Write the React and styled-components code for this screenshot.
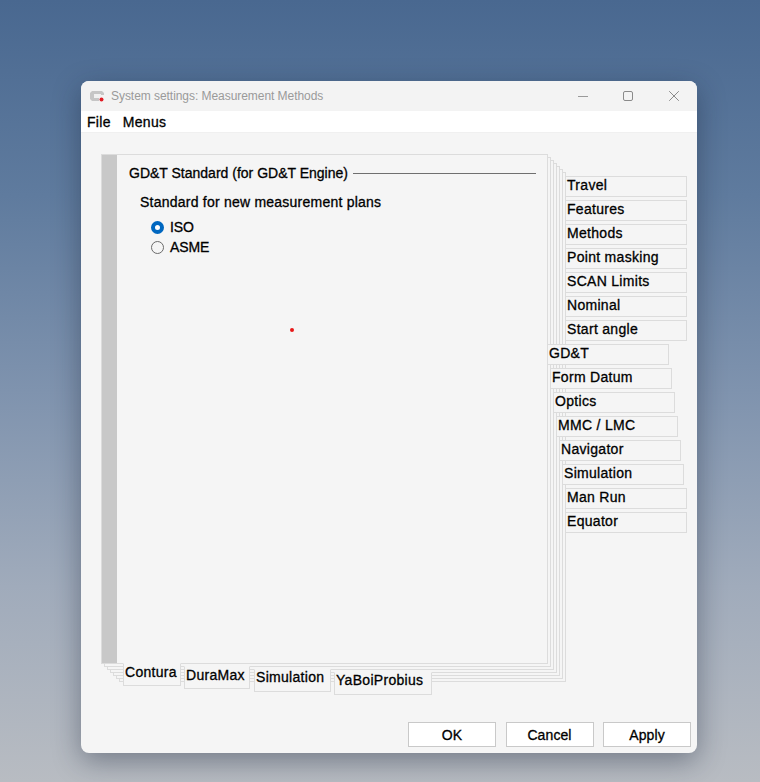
import React from "react";
import styled, { createGlobalStyle } from "styled-components";

const Global = createGlobalStyle`
  html, body { margin: 0; padding: 0; height: 100%; }
  body { overflow: hidden; }
  #root { height: 782px; }
`;

const Desktop = styled.div`
  width: 760px;
  height: 782px;
  box-sizing: border-box;
  padding: 81px 63px 29px 81px;
  background: linear-gradient(180deg, #496890 0%, #5f7b9e 25%, #7f93ae 50%, #a0abbb 75%, #b8bcc2 100%);
  font-family: "Liberation Sans", Arial, sans-serif;
  font-size: 14px;
  letter-spacing: 0.3px;
  color: #000;
  -webkit-text-stroke: 0.3px #000;
`;

const Window = styled.div`
  width: 616px;
  height: 672px;
  display: flex;
  flex-direction: column;
  background: #f5f5f5;
  border-radius: 8px;
  overflow: hidden;
  box-shadow: 0 8px 28px rgba(20, 30, 50, 0.4);
`;

const TitleBar = styled.div`
  height: 30px;
  flex: none;
  display: flex;
  align-items: center;
  padding-left: 8px;
  background: #f3f3f3;
  color: #9a9a9a;
  font-size: 12px;
  letter-spacing: -0.05px;
  -webkit-text-stroke: 0;
`;

const TitleText = styled.span`
  margin-left: 6px;
  flex: 1;
`;

const Controls = styled.div`
  display: flex;
  align-items: center;
  gap: 36px;
  margin-right: 18px;
`;

const ControlIcon = styled.svg`
  width: 10px;
  height: 10px;
  flex: none;
  margin-right: ${(p) => p.$pull || 0}px;
`;

const Menu = styled.div`
  height: 22px;
  flex: none;
  display: flex;
  align-items: center;
  gap: 12px;
  padding-left: 6px;
  background: #fff;
  border-bottom: 1px solid #f0f0f0;
  box-sizing: border-box;
`;

const Notebook = styled.div`
  flex: 1;
  padding: 21px 0 0 20px;
  display: flex;
  flex-direction: column;
`;

const Upper = styled.div`
  display: flex;
  align-items: flex-start;
`;

const Page = styled.div`
  width: 447px;
  height: 510px;
  box-sizing: border-box;
  flex: none;
  display: flex;
  position: relative;
  background: #f5f5f5;
  border: 1px solid #dcdcdc;
  box-shadow:
    3px 3px 0 -1px #f5f5f5, 3px 3px 0 0 #dcdcdc,
    6px 6px 0 -1px #f5f5f5, 6px 6px 0 0 #dcdcdc,
    9px 9px 0 -1px #f5f5f5, 9px 9px 0 0 #dcdcdc,
    12px 12px 0 -1px #f5f5f5, 12px 12px 0 0 #dcdcdc,
    15px 15px 0 -1px #f5f5f5, 15px 15px 0 0 #dcdcdc,
    18px 18px 0 -1px #f5f5f5, 18px 18px 0 0 #dcdcdc;
`;

const Strip = styled.div`
  width: 15px;
  flex: none;
  background: #c8c8c8;
`;

const Content = styled.div`
  flex: 1;
  padding: 9px 11px 0 12px;
`;

const GroupHead = styled.div`
  display: flex;
  align-items: center;
  gap: 5px;
  height: 18px;
  letter-spacing: 0;
`;

const Rule = styled.div`
  flex: 1;
  height: 1px;
  background: #6f6f6f;
`;

const Prompt = styled.div`
  margin: 11px 0 0 11px;
  height: 18px;
  line-height: 18px;
  letter-spacing: 0.23px;
`;

const Options = styled.div`
  margin: 9px 0 0 22px;
  display: flex;
  flex-direction: column;
  gap: 6px;
  letter-spacing: -0.1px;
`;

const Option = styled.label`
  display: flex;
  align-items: center;
  gap: 6px;
  height: 14px;
`;

const Radio = styled.span`
  width: 13px;
  height: 13px;
  box-sizing: border-box;
  border-radius: 50%;
  background: ${(p) => (p.$on ? "#fff" : "#f5f5f5")};
  border: ${(p) => (p.$on ? "4px solid #0067c0" : "1px solid #6b6b6b")};
`;

const Dot = styled.span`
  position: absolute;
  left: 188px;
  top: 173px;
  width: 4px;
  height: 4px;
  border-radius: 50%;
  background: #e81818;
`;

const SideTabs = styled.div`
  display: flex;
  flex-direction: column;
  gap: 3px;
  padding-top: 22px;
  margin-left: -1px;
  position: relative;
`;

const SideTab = styled.div`
  width: 122px;
  height: 21px;
  box-sizing: border-box;
  margin-left: ${(p) => p.$indent}px;
  padding-left: 1px;
  line-height: 16px;
  background: #f5f5f5;
  border: 1px solid #dcdcdc;
`;

const BottomTabs = styled.div`
  display: flex;
  align-items: flex-start;
  margin: -1px 0 0 22px;
  position: relative;
`;

const BottomTab = styled.div`
  height: 23px;
  box-sizing: border-box;
  width: ${(p) => p.$w}px;
  margin-top: ${(p) => p.$top}px;
  margin-left: ${(p) => p.$gap}px;
  padding-left: 1px;
  line-height: ${(p) => p.$line}px;
  background: #f5f5f5;
  border: 1px solid #dcdcdc;
  border-top-color: transparent;
`;

const Actions = styled.div`
  display: flex;
  justify-content: flex-end;
  gap: 9.5px;
  padding: 0 6px 6px 0;
`;

const Button = styled.button`
  width: 88px;
  height: 25px;
  padding: 0;
  background: #fff;
  border: 1px solid #c9c9c9;
  border-radius: 0;
  font: inherit;
  letter-spacing: 0.1px;
  color: inherit;
  -webkit-text-stroke: inherit;
`;

const sideTabs = [
  ["Travel", 18], ["Features", 18], ["Methods", 18], ["Point masking", 18],
  ["SCAN Limits", 18], ["Nominal", 18], ["Start angle", 18], ["GD&T", 0],
  ["Form Datum", 3], ["Optics", 6], ["MMC / LMC", 9], ["Navigator", 12],
  ["Simulation", 15], ["Man Run", 18], ["Equator", 18],
];

const bottomTabs = [
  ["Contura", 58, 0, 0, 16], ["DuraMax", 66, 3, 3, 16],
  ["Simulation", 77, 6, 4, 15], ["YaBoiProbius", 98, 9, 3, 15],
];

const AppIcon = () => (
  <svg width="16" height="14" viewBox="0 0 16 14">
    <path d="M3 2H13L15 4V6H12V5H5V9H10V12H3L1 10V4Z" fill="#c6c6c6" />
    <rect x="5" y="5" width="7" height="4" fill="#f1f1f1" />
    <circle cx="12.5" cy="10.5" r="2" fill="#e01b24" />
  </svg>
);

const Minimize = () => (
  <ControlIcon viewBox="0 0 10 10" $pull={-1}>
    <path d="M0 5.5H10" stroke="#9a9a9a" />
  </ControlIcon>
);

const Maximize = () => (
  <ControlIcon viewBox="0 0 10 10">
    <rect x="0.5" y="0.5" width="9" height="9" rx="1.5" fill="none" stroke="#8a8a8a" />
  </ControlIcon>
);

const Close = () => (
  <ControlIcon viewBox="0 0 10 10">
    <path d="M0.2 0.2L9.8 9.8M9.8 0.2L0.2 9.8" stroke="#8a8a8a" />
  </ControlIcon>
);

export default function App() {
  return (
    <Desktop>
      <Global />
      <Window>
        <TitleBar>
          <AppIcon />
          <TitleText>System settings: Measurement Methods</TitleText>
          <Controls>
            <Minimize />
            <Maximize />
            <Close />
          </Controls>
        </TitleBar>
        <Menu>
          <span>File</span>
          <span>Menus</span>
        </Menu>
        <Notebook>
          <Upper>
            <Page>
              <Strip />
              <Content>
                <GroupHead>
                  <span>GD&amp;T Standard (for GD&amp;T Engine)</span>
                  <Rule />
                </GroupHead>
                <Prompt>Standard for new measurement plans</Prompt>
                <Options>
                  <Option><Radio $on />ISO</Option>
                  <Option><Radio />ASME</Option>
                </Options>
              </Content>
              <Dot />
            </Page>
            <SideTabs>
              {sideTabs.map(([label, indent]) => (
                <SideTab key={label} $indent={indent}>{label}</SideTab>
              ))}
            </SideTabs>
          </Upper>
          <BottomTabs>
            {bottomTabs.map(([label, w, top, gap, line]) => (
              <BottomTab key={label} $w={w} $top={top} $gap={gap} $line={line}>{label}</BottomTab>
            ))}
          </BottomTabs>
        </Notebook>
        <Actions>
          <Button>OK</Button>
          <Button>Cancel</Button>
          <Button>Apply</Button>
        </Actions>
      </Window>
    </Desktop>
  );
}
